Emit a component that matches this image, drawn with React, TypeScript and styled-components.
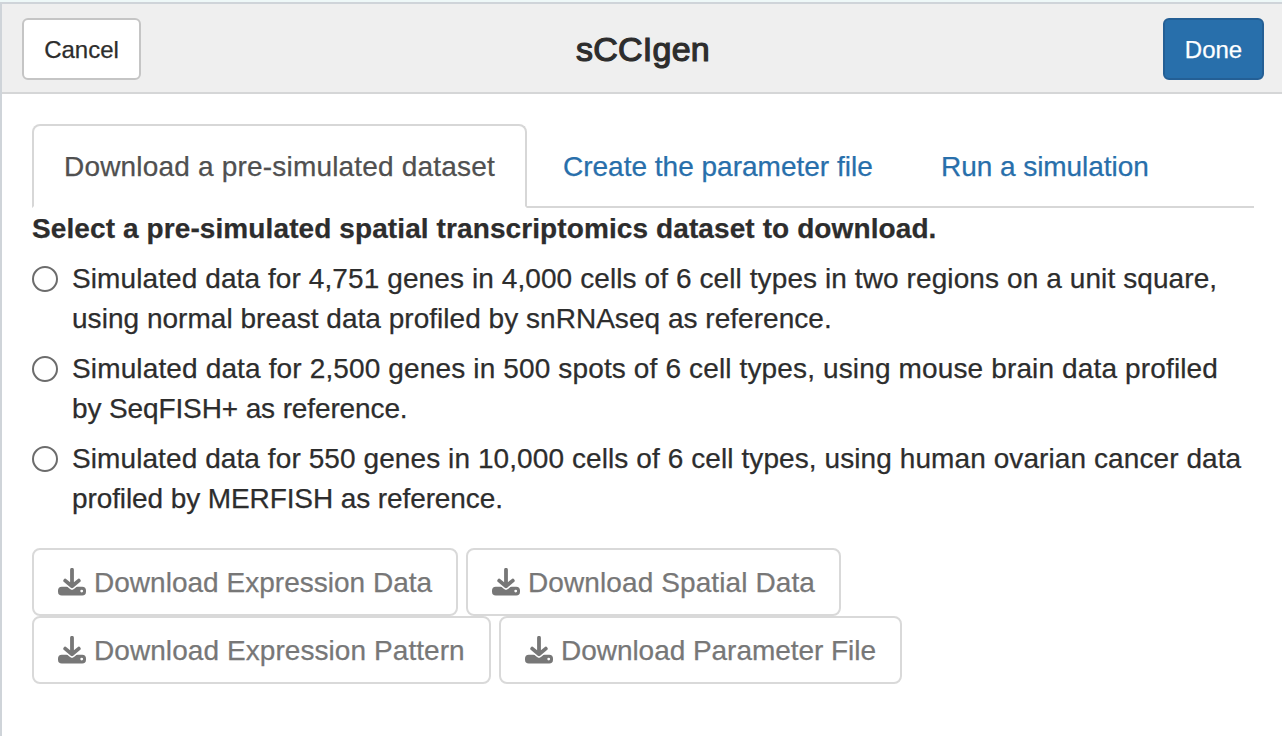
import React from "react";
import styled, { createGlobalStyle } from "styled-components";

const GlobalStyle = createGlobalStyle`
  *, *::before, *::after { box-sizing: border-box; }
  body {
    margin: 0;
    background: #fff;
    color: #2d2d2d;
    font-family: "Liberation Sans", Arial, sans-serif;
    font-size: 28px;
    line-height: 40px;
    -webkit-text-stroke: 0.25px currentColor;
  }
`;

const Dialog = styled.div`
  height: 736px;
  overflow: hidden;
  border-top: 2px solid #eef8f8;
`;

const Frame = styled.div`
  height: 100%;
  border-top: 2px solid #cfd4d9;
  border-left: 2px solid #cfd4d9;
`;

const TitleBar = styled.header`
  display: flex;
  justify-content: space-between;
  align-items: center;
  height: 90px;
  padding: 2px 18px 0 20px;
  background: #efefef;
  border-bottom: 2px solid #d5d6d7;
`;

const BarButton = styled.button<{ $primary?: boolean; $width: number }>`
  width: ${(p) => p.$width}px;
  height: 62px;
  padding: 0;
  border: 2px solid ${(p) => (p.$primary ? "#245f95" : "#c5c5c5")};
  border-radius: 6px;
  background: ${(p) => (p.$primary ? "#286fab" : "#fff")};
  color: ${(p) => (p.$primary ? "#fff" : "#2d2d2d")};
  font: 24px "Liberation Sans", Arial, sans-serif;
  white-space: nowrap;
`;

const Title = styled.h1`
  margin: 0 0 2px;
  padding-right: 18px;
  font-size: 34px;
  font-weight: 400;
  -webkit-text-stroke: 1.2px #2d2d2d;
`;

const Label = styled.span<{ $spacing?: number }>`
  display: block;
  padding-top: 1px;
  margin-bottom: -1px;
  letter-spacing: ${(p) => p.$spacing ?? 0}px;
  white-space: nowrap;
`;

const Content = styled.main`
  padding: 30px 28px 0 30px;
`;

const Tabs = styled.nav`
  display: flex;
  gap: 4px;
  height: 84px;
  border-bottom: 2px solid #d7d7d7;
`;

const Tab = styled.a<{ $active?: boolean; $width: number }>`
  width: ${(p) => p.$width}px;
  height: 84px;
  padding: 20px 0 20px 30px;
  border: 2px solid ${(p) => (p.$active ? "#d7d7d7" : "transparent")};
  border-bottom-color: ${(p) => (p.$active ? "#fff" : "transparent")};
  border-radius: 8px 8px 0 0;
  background: ${(p) => (p.$active ? "#fff" : "transparent")};
  color: ${(p) => (p.$active ? "#505050" : "#286fab")};
`;

const Heading = styled.div`
  height: 40px;
  font-weight: 700;
`;

const Option = styled.label`
  display: flex;
  gap: 14px;
  height: 80px;
  margin-top: 10px;
`;

const Radio = styled.input`
  appearance: none;
  flex: none;
  width: 26px;
  height: 26px;
  margin: 8px 0 0;
  border: 2px solid #6c6c6c;
  border-radius: 50%;
  background: #fff;
`;

const OptionText = styled.span`
  display: flex;
  flex-direction: column;
`;

const Downloads = styled.div`
  margin-top: 30px;
`;

const DownloadRow = styled.div`
  display: flex;
  gap: 8px;
`;

const DownloadButton = styled.button<{ $width: number }>`
  display: flex;
  align-items: center;
  gap: 8px;
  width: ${(p) => p.$width}px;
  height: 68px;
  padding: 0 0 0 24px;
  border: 2px solid #d9d9d9;
  border-radius: 8px;
  background: #fff;
  color: #777;
  font: 28px/40px "Liberation Sans", Arial, sans-serif;
`;

const IconSvg = styled.svg`
  flex: none;
`;

const DownloadIcon = () => (
  <IconSvg width="28" height="28" viewBox="0 0 28 28" fill="none">
    <rect x="0" y="18.7" width="28" height="8.8" rx="3.8" fill="#777" />
    <circle cx="23.7" cy="23.1" r="1.4" fill="#fff" />
    <path d="M7.4 13.2 14 18.7 20.6 13.2" stroke="#fff" strokeWidth="6.2" strokeLinecap="round" strokeLinejoin="round" />
    <path d="M14 1.7V17M7.2 12.6l6.8 5.6 6.8-5.6" stroke="#777" strokeWidth="3.8" strokeLinecap="round" strokeLinejoin="round" />
  </IconSvg>
);

type Line = { text: string; spacing: number };

const tabs = [
  { text: "Download a pre-simulated dataset", spacing: 0.19, width: 495, active: true },
  { text: "Create the parameter file", spacing: 0, width: 374 },
  { text: "Run a simulation", spacing: -0.05, width: 272 },
];

const options: Line[][] = [
  [
    { text: "Simulated data for 4,751 genes in 4,000 cells of 6 cell types in two regions on a unit square,", spacing: 0.095 },
    { text: "using normal breast data profiled by snRNAseq as reference.", spacing: 0.03 },
  ],
  [
    { text: "Simulated data for 2,500 genes in 500 spots of 6 cell types, using mouse brain data profiled", spacing: 0.14 },
    { text: "by SeqFISH+ as reference.", spacing: -0.12 },
  ],
  [
    { text: "Simulated data for 550 genes in 10,000 cells of 6 cell types, using human ovarian cancer data", spacing: 0.087 },
    { text: "profiled by MERFISH as reference.", spacing: -0.1 },
  ],
];

const downloads = [
  [
    { text: "Download Expression Data", spacing: 0.02, width: 426 },
    { text: "Download Spatial Data", spacing: 0.1, width: 375 },
  ],
  [
    { text: "Download Expression Pattern", spacing: 0.07, width: 459 },
    { text: "Download Parameter File", spacing: -0.04, width: 403 },
  ],
];

export default function App() {
  return (
    <Dialog>
      <GlobalStyle />
      <Frame>
        <TitleBar>
          <BarButton $width={119}>
            <Label>Cancel</Label>
          </BarButton>
          <Title>
            <Label $spacing={0.25}>sCCIgen</Label>
          </Title>
          <BarButton $primary $width={101}>
            <Label>Done</Label>
          </BarButton>
        </TitleBar>
        <Content>
          <Tabs>
            {tabs.map((t) => (
              <Tab key={t.text} $active={t.active} $width={t.width}>
                <Label $spacing={t.spacing}>{t.text}</Label>
              </Tab>
            ))}
          </Tabs>
          <Heading>
            <Label $spacing={0.1}>Select a pre-simulated spatial transcriptomics dataset to download.</Label>
          </Heading>
          {options.map((lines, i) => (
            <Option key={i}>
              <Radio type="radio" name="dataset" />
              <OptionText>
                {lines.map((l) => (
                  <Label key={l.text} $spacing={l.spacing}>{l.text}</Label>
                ))}
              </OptionText>
            </Option>
          ))}
          <Downloads>
            {downloads.map((row, i) => (
              <DownloadRow key={i}>
                {row.map((d) => (
                  <DownloadButton key={d.text} $width={d.width}>
                    <DownloadIcon />
                    <Label $spacing={d.spacing}>{d.text}</Label>
                  </DownloadButton>
                ))}
              </DownloadRow>
            ))}
          </Downloads>
        </Content>
      </Frame>
    </Dialog>
  );
}
